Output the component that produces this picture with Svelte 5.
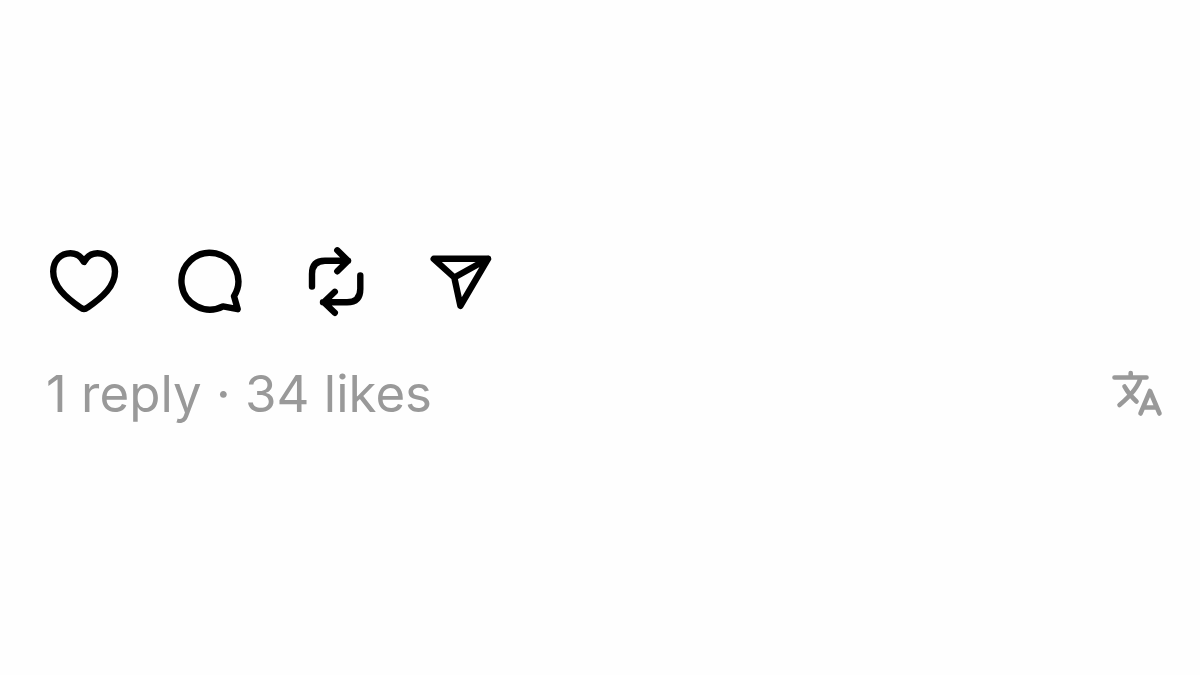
<script>
	let likes = $state(34);
	let replies = $state(1);
	let liked = $state(false);

	function toggleLike() {
		liked = !liked;
		likes += liked ? 1 : -1;
	}
</script>

<main class="post-footer">
	<div class="actions">
		<button type="button" aria-label="Like" aria-pressed={liked} onclick={toggleLike}>
			<svg viewBox="0 0 90 84" class:filled={liked}>
				<path d="M44 22C41 16 36 13.2 30.5 13.2C20.5 13.2 13.2 21 13.2 31.5C13.2 46 25 57 40.5 67.6Q44 70.4 47.5 67.6C63 57 75 46 75 31.5C75 21 67.5 13.2 57.5 13.2C52 13.2 47 16 44 22Z" />
			</svg>
		</button>
		<button type="button" aria-label="Reply">
			<svg viewBox="0 0 90 84">
				<path d="M68 56.2A28.4 28.4 0 1 0 57 66.4L71.7 69.2Z" />
			</svg>
		</button>
		<button type="button" aria-label="Repost">
			<svg viewBox="0 0 90 84">
				<path d="M20 46.5V34Q20 20.8 33 20.8H56M45.3 10.3L56 20.8L45.3 31.3" />
				<path d="M68.3 35.5V49Q68.3 62.3 55 62.3H31M42.8 51.8L31.8 62.3L42.8 72.8" />
			</svg>
		</button>
		<button type="button" aria-label="Share">
			<svg viewBox="0 0 90 84">
				<path d="M15.7 18.8H70L42.4 65.8L36.3 37.5ZM36.3 37.5L70 18.8" />
			</svg>
		</button>
	</div>

	<div class="meta">
		<p>{replies} reply · {likes} likes</p>
		<button type="button" aria-label="Translate">
			<svg class="translate" viewBox="0 0 80 70">
				<path d="M14.5 17.5H46.5M30.7 13V17M40.5 18C38 28 29 37 19.5 45M24.5 26.5C27.5 32 32 37.5 36.5 41.5" />
				<path d="M40.5 53.5L50 31L59.5 53.5M43.8 47.5H56.2" />
			</svg>
		</button>
	</div>
</main>

<style>
	:global(body) {
		margin: 0;
		background: #fefefe;
	}

	.post-footer {
		box-sizing: border-box;
		min-height: 100vh;
		padding: 0 20px 6px 40px;
		display: flex;
		flex-direction: column;
		justify-content: center;
		gap: 36px;
		font-family: Inter, 'Liberation Sans', sans-serif;
	}

	.actions {
		display: flex;
		gap: 36px;
	}

	button {
		padding: 0;
		border: 0;
		background: none;
		color: #000;
		cursor: pointer;
	}

	svg {
		display: block;
		width: 90px;
		height: 84px;
		fill: none;
		stroke: currentColor;
		stroke-width: 6.4;
		stroke-linecap: round;
		stroke-linejoin: round;
	}

	svg.filled {
		fill: currentColor;
	}

	.meta {
		display: flex;
		align-items: flex-start;
		justify-content: space-between;
		padding-left: 6px;
		color: #999;
	}

	.meta p {
		margin: 0;
		font-size: 51px;
		line-height: 68px;
	}

	.meta button {
		color: #999;
	}

	svg.translate {
		width: 80px;
		height: 70px;
		stroke-width: 4.6;
	}
</style>
